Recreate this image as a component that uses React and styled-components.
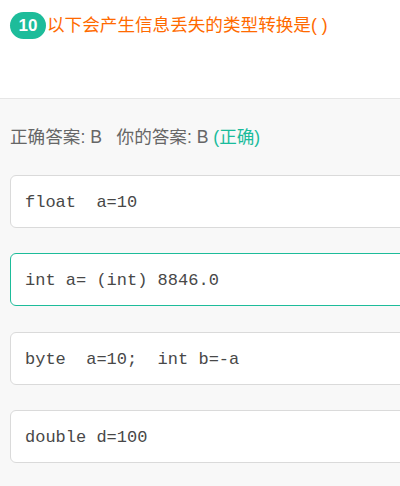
import React from "react";
import styled, { createGlobalStyle } from "styled-components";

const Global = createGlobalStyle`
  html, body { margin: 0; padding: 0; background: #f8f8f8; overflow: hidden; }
  body { width: 400px; height: 486px; font-family: "Liberation Sans", "Noto Sans CJK SC", sans-serif; }
`;

const Page = styled.div`
  width: 400px;
  height: 486px;
  overflow: hidden;
  display: flex;
  flex-direction: column;
`;

const Header = styled.header`
  background: #fff;
  height: 99px;
  box-sizing: border-box;
  border-bottom: 1px solid #e6e6e6;
  padding: 12px 10px 0;
`;

const TitleRow = styled.div`
  display: flex;
  align-items: center;
  gap: 1px;
`;

const Badge = styled.span`
  display: inline-flex;
  align-items: center;
  justify-content: center;
  width: 36px;
  height: 27px;
  border-radius: 14px;
  background: #1dbc9a;
  color: #fff;
  font-family: "Liberation Sans", sans-serif;
  font-weight: bold;
  font-size: 17px;
  flex-shrink: 0;
`;

const Title = styled.span`
  color: #ff6a00;
  font-size: 17.6px;
  line-height: 27px;
  font-family: "Liberation Sans", "Noto Sans CJK SC", sans-serif;
  white-space: nowrap;
`;

const Body = styled.section`
  flex: 1;
  background: #f8f8f8;
  padding: 26px 0 0 10px;
`;

const AnswerLine = styled.div`
  font-size: 17.6px;
  line-height: 24px;
  color: #666;
  white-space: pre;
  margin-bottom: 26px;
`;

const Right = styled.span`
  color: #1abc9c;
`;

const Options = styled.div`
  display: flex;
  flex-direction: column;
  gap: 25.4px;
`;

const Option = styled.div`
  box-sizing: border-box;
  width: 420px;
  height: 53px;
  background: #fff;
  border: 1px solid ${(p) => (p.$selected ? "#1dbc9a" : "#dadada")};
  border-radius: 6px;
  display: flex;
  align-items: center;
  padding: 2px 0 0 14px;
  font-family: "Liberation Mono", "Courier New", monospace;
  font-size: 17px;
  color: #484848;
  white-space: pre;
`;

const options = [
  { text: "float  a=10" },
  { text: "int a= (int) 8846.0", selected: true },
  { text: "byte  a=10;  int b=-a" },
  { text: "double d=100" },
];

export default function App() {
  return (
    <Page>
      <Global />
      <Header>
        <TitleRow>
          <Badge>10</Badge>
          <Title>以下会产生信息丢失的类型转换是( )</Title>
        </TitleRow>
      </Header>
      <Body>
        <AnswerLine>
          正确答案: B   你的答案: B <Right>(正确)</Right>
        </AnswerLine>
        <Options>
          {options.map((o) => (
            <Option key={o.text} $selected={o.selected}>
              {o.text}
            </Option>
          ))}
        </Options>
      </Body>
    </Page>
  );
}
